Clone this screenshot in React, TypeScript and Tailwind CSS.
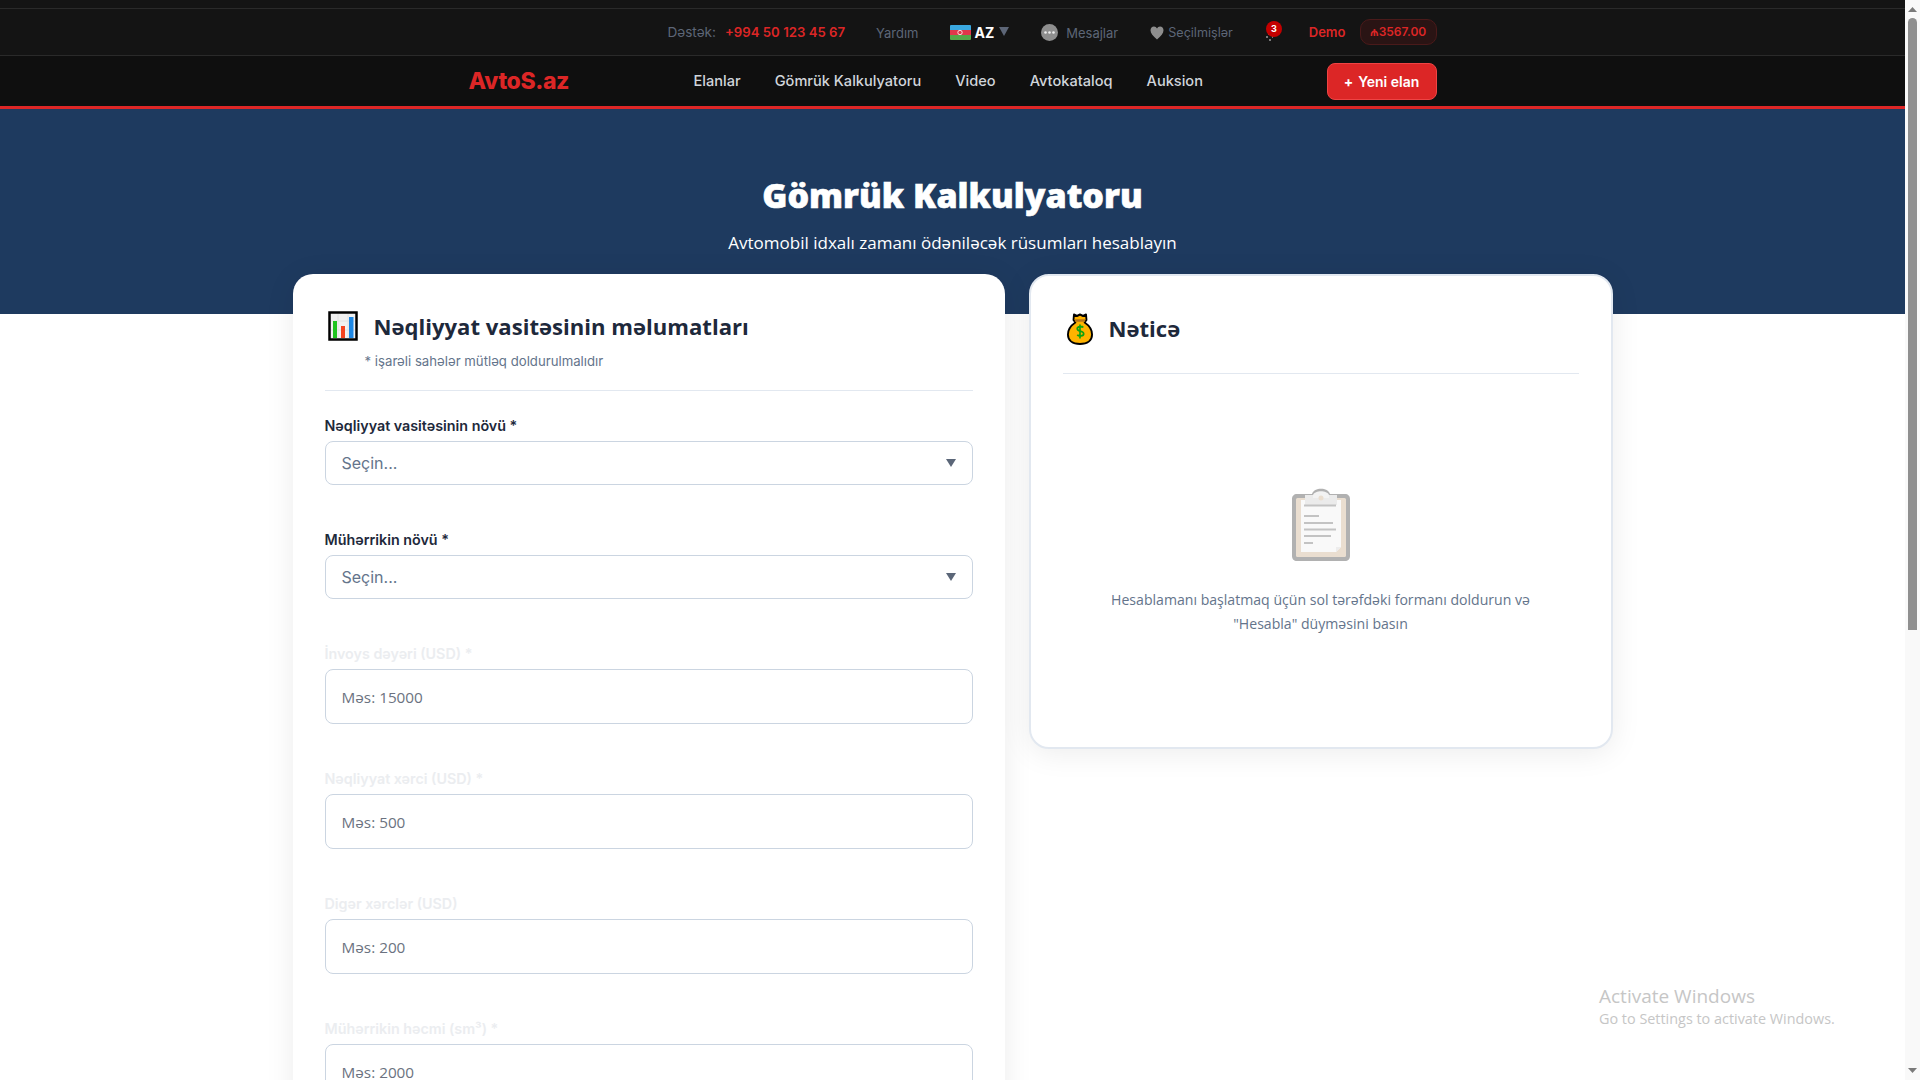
import React from "react";

const ChartIcon = () => (
  <svg width="30" height="30" viewBox="0 0 30 30" className="shrink-0">
    <rect x="1.5" y="1.5" width="27" height="27" fill="#f1f1f1" stroke="#000" strokeWidth="2.5" />
    <path d="M10 3v24M20 3v24M3 10h24M3 19h24" stroke="#e2e2e2" strokeWidth="1" />
    <rect x="5" y="10" width="4" height="17" fill="#1fc41f" />
    <rect x="13" y="15" width="4" height="12" fill="#f4431f" />
    <rect x="21" y="6" width="4.5" height="21" fill="#1e88e5" />
  </svg>
);

const BagIcon = () => (
  <svg width="26" height="32" viewBox="0 0 28 32" preserveAspectRatio="none" className="shrink-0">
    <path d="M7.500 1.500l3.200 1.500 3.300-1.500 3.300 1.500 3.200-1.500 .5 5.500-2 2.500c4 2.500 8 6.500 8 12 0 6-5 9.500-13 9.500S1 27.500 1 21.500c0-5.500 4-9.500 8-12l-2-2.500z" fill="#ffb300" stroke="#000" strokeWidth="2" strokeLinejoin="round" />
    <path d="M8.500 7.500h11" stroke="#b5761a" strokeWidth="2.500" />
    <path d="M17.500 14.500c-1-1.400-6.500-1.600-6.500 1.200 0 3 7 1.800 7 5 0 2.800-5.500 2.600-7 1.200M14 11.500v14" fill="none" stroke="#0fa30f" strokeWidth="1.800" />
  </svg>
);

const ClipboardIcon = () => (
  <svg width="60" height="73" viewBox="0 0 60 73" className="opacity-50">
    <path d="M6 6h15c2-7 16-7 18 0h15c3 0 5 2 5 5v57c0 3-2 5-5 5H6c-3 0-5-2-5-5V11c0-3 2-5 5-5z" fill="#666" />
    <rect x="5" y="10" width="50" height="59" rx="1.5" fill="#d6bfa3" />
    <path d="M10 12h40v47l-5 5H10z" fill="#f4f4f4" />
    <path d="M45 64l5-5h-5z" fill="#ddd" />
    <rect x="14" y="7" width="32" height="10" fill="#d9d9d9" />
    <path d="M22 7c2-5 14-5 16 0v3H22z" fill="#e8e8e8" />
    <circle cx="30" cy="10" r="2.5" fill="#d6bfa3" />
    <path d="M13 17.500h32M13 28h15M13 35h29M13 41.500h32M13 48h27M13 55h9" stroke="#888" strokeWidth="2" />
  </svg>
);

const Flag = () => (
  <svg width="21" height="15" viewBox="0 0 21 15" className="rounded-[1px]">
    <rect width="21" height="5" fill="#3aa8e0" />
    <rect y="5" width="21" height="5" fill="#e0384a" />
    <rect y="10" width="21" height="5" fill="#55a748" />
    <circle cx="10" cy="7.500" r="2.200" fill="none" stroke="#fff" strokeWidth="0.8" />
  </svg>
);

const Field = ({ label, children, faint }: { label: string; children: React.ReactNode; faint?: boolean }) => (
  <div className="mb-[45px]">
    <div className={`h-5 mb-[5px] leading-5 text-[14.3px] font-semibold font-['Inter',sans-serif] whitespace-nowrap ${faint ? "text-[#ebedf0]" : "text-[#1e293b]"}`}>
      {label}
    </div>
    {children}
  </div>
);

const SelectBox = () => (
  <div className="relative">
    <select className="appearance-none block w-full h-11 rounded-lg border-[1.5px] border-[#cbd5e1] bg-white pl-4 text-[16px] text-[#64748b] font-['Inter',sans-serif] outline-none">
      <option>Seçin...</option>
    </select>
    <svg width="10" height="8" viewBox="0 0 10 8" className="absolute right-[17px] top-[18px]">
      <path d="M0 0h10L5 8z" fill="#5b6678" />
    </svg>
  </div>
);

const InputBox = ({ placeholder }: { placeholder: string }) => (
  <input
    placeholder={placeholder}
    className="block w-full h-[55px] rounded-lg border-[1.5px] border-[#cbd5e1] bg-white pl-4 text-[15.3px] text-[#1e293b] font-['Open_Sans',sans-serif] outline-none placeholder:text-[#6b7280]"
  />
);

export default function App() {
  return (
    <div className="relative flex h-[1080px] w-full overflow-hidden bg-white">
      <div className="flex-1 min-w-0 h-full overflow-hidden bg-white font-['Inter',sans-serif]">
        {/* Top bar */}
        <div className="h-[56px] pt-[8px] bg-[#141414]">
          <div className="h-[48px] border-t border-b border-[#2a2a2a] flex items-center justify-center">
            <div className="w-[969px] flex items-center justify-end text-[13px] text-[#5d6677] relative left-[-0.500px]">
              <span className="text-[13.6px] mt-[1px]">Dəstək:</span>
              <span className="ml-[9px] mt-[1px] text-[13.2px] font-semibold text-[#dc2626]">+994 50 123 45 67</span>
              <span className="ml-[31px] mt-[3px]">Yardım</span>
              <span className="ml-[32px] flex items-center">
                <Flag />
                <span className="ml-[3px] font-bold text-[14px] text-white">AZ</span>
                <svg width="10" height="9" viewBox="0 0 10 9" className="ml-[5px] mb-[2px]"><path d="M0 0h10L5 9z" fill="#5d6677" /></svg>
              </span>
              <span className="ml-[32px] flex items-center mt-[1px]">
                <svg width="17" height="17" viewBox="0 0 17 17"><circle cx="8.500" cy="8.500" r="8.500" fill="#8e8e8e" /><circle cx="4.500" cy="8.500" r="1.300" fill="#eee" /><circle cx="8.500" cy="8.500" r="1.300" fill="#eee" /><circle cx="12.500" cy="8.500" r="1.300" fill="#eee" /></svg>
                <span className="ml-[8px] mt-[2px]">Mesajlar</span>
              </span>
              <span className="ml-[32px] flex items-center mt-[3px]">
                <svg width="14" height="14" viewBox="0 0 14 14"><path d="M7 13.500C3 10 .500 7.500.500 4.300.500 2 2 .500 4 .500c1.300 0 2.400.7 3 2 .6-1.300 1.700-2 3-2 2 0 3.500 1.500 3.500 3.800C13.500 7.500 11 10 7 13.500z" fill="#8e8e8e" /></svg>
                <span className="ml-[4px] text-[12.6px]">Seçilmişlər</span>
              </span>
              <span className="relative ml-[32px] w-[12px] h-[14px]">
                <svg width="10" height="8" viewBox="0 0 10 8" className="absolute left-0 top-[8px]"><path d="M1 4h2M7 4h1M4 7h2M3 1h1" stroke="#ddd" strokeWidth="1" /></svg>
                <span className="absolute left-[1px] top-[-4px] flex h-4 w-4 items-center justify-center rounded-full bg-[#c40000] text-[9px] font-bold text-white">3</span>
              </span>
              <span className="ml-[32px] mt-[1px] font-semibold text-[#dc2626]">Demo</span>
              <span className="ml-[14px] flex h-[26px] w-[77px] items-center justify-center rounded-[10px] border border-[#4a1a1a] bg-[#2a1414] text-[12px] font-semibold text-[#dc2626]">₼3567.00</span>
            </div>
          </div>
        </div>

        {/* Nav */}
        <div className="h-[53px] border-b-[3px] border-[#dc2626] bg-[#0f0f0f] flex justify-center">
          <div className="w-[969px] flex items-center relative left-[-0.500px]">
            <span className="w-[226px] pl-[1px] text-[23px] font-extrabold tracking-[-0.400px] text-[#dc2626]">AvtoS.az</span>
            <div className="flex items-center gap-[34px] mt-[2px] text-[14.6px] font-medium text-[#d1d5db]">
              <span>Elanlar</span>
              <span>Gömrük Kalkulyatoru</span>
              <span>Video</span>
              <span>Avtokataloq</span>
              <span>Auksion</span>
            </div>
            <button className="ml-auto mt-[1px] flex h-[37px] w-[110px] items-center justify-center gap-[5px] rounded-lg border border-[#ef4444] bg-[#dc2626] text-[14px] font-semibold text-white">
              <span className="font-bold">+</span>
              <span>Yeni elan</span>
            </button>
          </div>
        </div>

        {/* Hero */}
        <div className="h-[205px] bg-[#1e3a5f] pt-[62px] text-center text-white font-['Open_Sans',sans-serif]">
          <h1 className="text-[34px] leading-[48px] font-extrabold [-webkit-text-stroke:0.6px_white]">Gömrük Kalkulyatoru</h1>
          <p className="mt-[12px] text-[17px] leading-[24px]">Avtomobil idxalı zamanı ödəniləcək rüsumları hesablayın</p>
        </div>

        {/* Content */}
        <div className="-mt-10 mx-auto grid w-[1320px] grid-cols-[712px_584px] gap-6 items-start">
          <div className="rounded-[20px] bg-white px-8 pt-8 shadow-[0_4px_30px_rgba(0,0,0,0.08)]">
            <div className="pb-[19px] border-b border-[#e2e8f0] mb-[25px]">
              <div className="flex h-10 items-center pl-[3px] gap-[16px]">
                <ChartIcon />
                <h2 className="text-[22.1px] font-bold text-[#1e293b] font-['Open_Sans',sans-serif] leading-8">Nəqliyyat vasitəsinin məlumatları</h2>
              </div>
              <p className="pl-10 mt-[5px] text-[13.2px] leading-[20px] text-[#64748b]">* işarəli sahələr mütləq doldurulmalıdır</p>
            </div>
            <Field label="Nəqliyyat vasitəsinin növü *"><SelectBox /></Field>
            <Field label="Mühərrikin növü *"><SelectBox /></Field>
            <Field faint label="İnvoys dəyəri (USD) *"><InputBox placeholder="Məs: 15000" /></Field>
            <Field faint label="Nəqliyyat xərci (USD) *"><InputBox placeholder="Məs: 500" /></Field>
            <Field faint label="Digər xərclər (USD)"><InputBox placeholder="Məs: 200" /></Field>
            <Field faint label="Mühərrikin həcmi (sm³) *"><InputBox placeholder="Məs: 2000" /></Field>
          </div>

          <div className="h-[475px] rounded-[20px] border-2 border-[#e2e8f0] bg-white px-8 pt-[36px] shadow-[0_4px_30px_rgba(0,0,0,0.08)]">
            <div className="flex h-[33px] items-center gap-[16px] pl-[4px]">
              <BagIcon />
              <h2 className="text-[22.1px] font-bold text-[#1e293b] font-['Open_Sans',sans-serif]">Nəticə</h2>
            </div>
            <div className="mt-[28px] border-b border-[#e2e8f0]" />
            <div className="flex flex-col items-center pt-[114px]">
              <ClipboardIcon />
              <p className="mt-[27px] w-[440px] text-center text-[14.1px] leading-[24px] text-[#64748b] font-['Open_Sans',sans-serif]">
                Hesablamanı başlatmaq üçün sol tərəfdəki formanı doldurun və "Hesabla" düyməsini basın
              </p>
            </div>
          </div>
        </div>
      </div>

      {/* Scrollbar */}
      <div className="flex w-[15px] shrink-0 flex-col items-center bg-[#f9f9f9] pt-[7px] pb-[7px]">
        <svg width="9" height="5" viewBox="0 0 9 5"><path d="M4.500 0L9 5H0z" fill="#7a7a7a" /></svg>
        <div className="mt-[6px] h-[612px] w-[9px] rounded-t-[5px] bg-[#8f8f8f]" />
        <svg width="9" height="5" viewBox="0 0 9 5" className="mt-auto"><path d="M0 0h9L4.500 5z" fill="#7a7a7a" /></svg>
      </div>

      {/* Windows activation watermark */}
      <div className="absolute left-[1599px] top-[983px] text-[#c6c6c6] font-['Open_Sans',sans-serif]">
        <div className="text-[19px] leading-[26px]">Activate Windows</div>
        <div className="text-[14.4px] leading-[20px]">Go to Settings to activate Windows.</div>
      </div>
    </div>
  );
}
